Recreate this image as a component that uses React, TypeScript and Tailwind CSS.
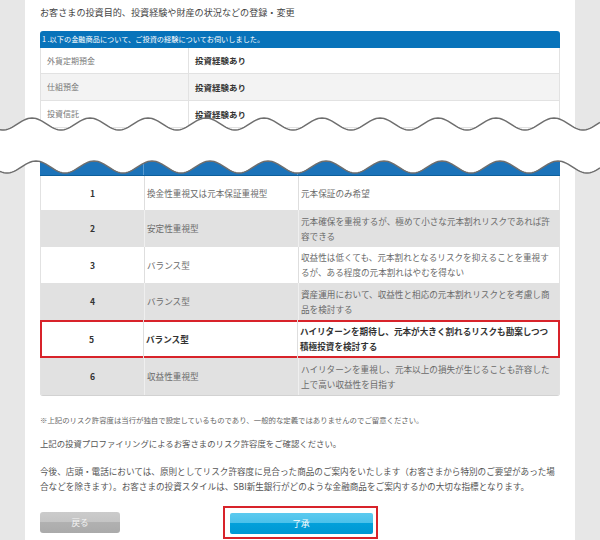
import React from "react";

const font = "font-['Noto_Sans_CJK_JP','Noto_Sans',sans-serif]";

function wavePath(mid: number, amp: number, period: number, phase: number, w: number) {
  let d = "";
  for (let x = 0; x <= w; x += 2) {
    const y = mid - amp * Math.cos((2 * Math.PI * (x - phase)) / period);
    d += (x === 0 ? "M" : "L") + x + " " + y.toFixed(2) + " ";
  }
  return d.trim();
}

const experience = [
  { name: "外貨定期預金", value: "投資経験あり", h: "h-[26px]", bg: "bg-white" },
  { name: "仕組預金", value: "投資経験あり", h: "h-[27px]", bg: "bg-[#f3f3f3]" },
  { name: "投資信託", value: "投資経験あり", h: "h-[27px]", bg: "bg-white" },
];

type RiskRow = {
  n: string;
  type: string;
  desc: string[];
  h: string;
  gray: boolean;
  selected?: boolean;
};

const riskRows: RiskRow[] = [
  { n: "1", type: "換金性重視又は元本保証重視型", desc: ["元本保証のみ希望"], h: "h-[34px]", gray: false },
  {
    n: "2",
    type: "安定性重視型",
    desc: ["元本確保を重視するが、極めて小さな元本割れリスクであれば許", "容できる"],
    h: "h-[37px]",
    gray: true,
  },
  {
    n: "3",
    type: "バランス型",
    desc: ["収益性は低くても、元本割れとなるリスクを抑えることを重視す", "るが、ある程度の元本割れはやむを得ない"],
    h: "h-[36px]",
    gray: false,
  },
  {
    n: "4",
    type: "バランス型",
    desc: ["資産運用において、収益性と相応の元本割れリスクとを考慮し商", "品を検討する"],
    h: "h-[37px]",
    gray: true,
  },
  {
    n: "5",
    type: "バランス型",
    desc: ["ハイリターンを期待し、元本が大きく割れるリスクも勘案しつつ", "積極投資を検討する"],
    h: "h-[38px]",
    gray: false,
    selected: true,
  },
  {
    n: "6",
    type: "収益性重視型",
    desc: ["ハイリターンを重視し、元本以上の損失が生じることも許容した", "上で高い収益性を目指す"],
    h: "h-[37px]",
    gray: true,
  },
];

function Side() {
  return <div className="w-[25px] shrink-0 bg-[#e7e7e7]" />;
}

function TopWave() {
  const line = wavePath(12, 6, 58, 32, 600);
  return (
    <svg className="pointer-events-none absolute bottom-0 left-0 h-[28px] w-[600px]" viewBox="0 0 600 28">
      <path d={line + " L600 28 L0 28 Z"} fill="#ffffff" />
      <path d={line} fill="none" stroke="#6e6e6e" strokeWidth="1.5" />
    </svg>
  );
}

function BottomWave() {
  const line = wavePath(27, 6, 58, 36, 600);
  return (
    <svg className="pointer-events-none absolute left-0 top-0 h-[40px] w-[600px]" viewBox="0 0 600 40">
      <path d={line + " L600 0 L0 0 Z"} fill="#ffffff" />
      <path d={line} fill="none" stroke="#6e6e6e" strokeWidth="1.5" />
    </svg>
  );
}

export default function App() {
  return (
    <div className={`h-[540px] w-[600px] overflow-hidden bg-white ${font}`}>
      {/* upper part, cut off by the wave */}
      <div className="relative flex h-[140px] overflow-hidden">
        <Side />
        <div className="w-[550px] bg-white px-[15px] pt-[5px]">
          <h1 className="mb-[12px] text-[9.1px] font-normal leading-[14px] text-[#444]">
            お客さまの投資目的、投資経験や財産の状況などの登録・変更
          </h1>
          <div className="w-[520px]">
            <div className="h-[17px] rounded-t-[3px] bg-[#0873ba] pl-[2px] text-[7.2px] leading-[17px] text-white">
              1 .以下の金融商品について、ご投資の経験についてお伺いしました。
            </div>
            {experience.map((r) => (
              <div
                key={r.name}
                className={`grid grid-cols-[148px_1fr] border-x border-b border-[#e2e2e2] ${r.h} ${r.bg}`}
              >
                <div className="flex items-center border-r border-[#e2e2e2] px-[6px] text-[8px] text-[#777]">
                  {r.name}
                </div>
                <div className="flex items-center px-[6px] text-[8.5px] font-bold text-[#333]">{r.value}</div>
              </div>
            ))}
          </div>
        </div>
        <Side />
        <TopWave />
      </div>

      {/* lower part */}
      <div className="relative flex h-[400px]">
        <Side />
        <div className="w-[550px] bg-white px-[15px]">
          <div className="w-[520px] overflow-hidden rounded-b-[3px] border-b border-[#d2d2d2]">
            <div className="grid h-[36px] grid-cols-[104px_154px_1fr] border-b border-[#0d5f9c] bg-[#1c73b9]">
              <div className="border-r border-[#5a9bd0]" />
              <div className="border-r border-[#5a9bd0]" />
              <div />
            </div>
            {riskRows.map((r) => (
              <div
                key={r.n}
                className={`grid grid-cols-[104px_154px_1fr] text-[8.6px] leading-[15px] ${r.h} ${
                  r.gray ? "bg-[#e1e1e1]" : "bg-white"
                } ${r.selected ? "ring-2 ring-inset ring-[#d8232a]" : "border-x border-[#e2e2e2]"}`}
              >
                <div
                  className={`flex items-center justify-center border-r font-bold text-[#333] ${
                    r.gray ? "border-[#efefef]" : "border-[#dedede]"
                  }`}
                >
                  {r.n}
                </div>
                <div
                  className={`flex items-center border-r pl-[2px] ${
                    r.gray ? "border-[#efefef]" : "border-[#dedede]"
                  } ${r.selected ? "font-bold text-[#333]" : "text-[#6a6a6a]"}`}
                >
                  {r.type}
                </div>
                <div
                  className={`flex flex-col justify-center pl-[2px] ${
                    r.selected ? "font-bold text-[#333]" : "text-[#6a6a6a]"
                  }`}
                >
                  {r.desc.map((line) => (
                    <span key={line} className="whitespace-nowrap">
                      {line}
                    </span>
                  ))}
                </div>
              </div>
            ))}
          </div>

          <p className="mt-[18px] text-[7.4px] leading-[12px] text-[#666]">
            ※上記のリスク許容度は当行が独自で設定しているものであり、一般的な定義ではありませんのでご留意ください。
          </p>
          <p className="mt-[10px] text-[8.4px] leading-[14px] text-[#555]">
            上記の投資プロファイリングによるお客さまのリスク許容度をご確認ください。
          </p>
          <p className="mt-[14px] text-[8.6px] leading-[15px] text-[#555]">
            <span className="whitespace-nowrap">
              今後、店頭・電話においては、原則としてリスク許容度に見合った商品のご案内をいたします（お客さまから特別のご要望があった場
            </span>
            <br />
            <span className="whitespace-nowrap">
              合などを除きます）。お客さまの投資スタイルは、SBI新生銀行がどのような金融商品をご案内するかの大切な指標となります。
            </span>
          </p>

          <div className="mt-[12px] grid grid-cols-[1fr_auto_1fr] items-center">
            <button
              type="button"
              className="h-[21px] w-[80px] justify-self-start rounded-[3px] bg-[linear-gradient(#cbcbcb_0%,#c4c4c4_50%,#b1b1b1_50%,#aaaaaa_100%)] text-[8.6px] text-[#f4f4f4]"
            >
              戻る
            </button>
            <div className="border-2 border-[#d8232a] pb-[3px] pl-[5px] pr-[3px] pt-[5px]">
              <button
                type="button"
                className="block h-[21px] w-[143px] rounded-[2px] bg-[linear-gradient(#5ccaef_0%,#49c0ea_50%,#02a0da_50%,#0097d3_100%)] text-[8.6px] text-white"
              >
                了承
              </button>
            </div>
            <div />
          </div>
        </div>
        <Side />
        <BottomWave />
      </div>
    </div>
  );
}
